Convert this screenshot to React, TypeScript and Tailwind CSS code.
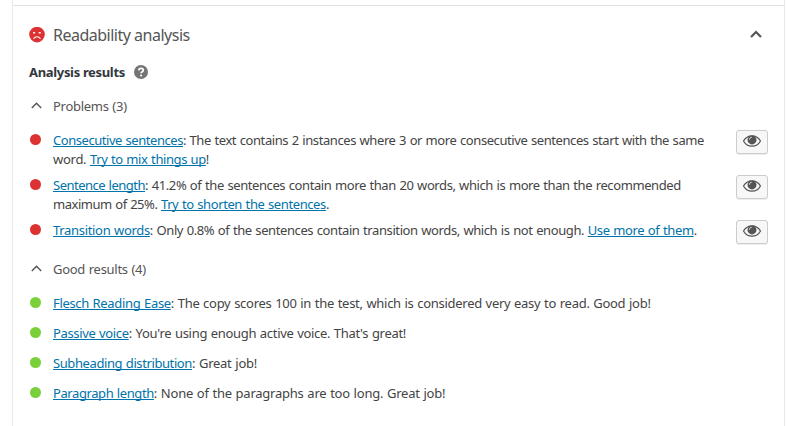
import type { ReactNode } from "react";

type Part = { text: string; link?: boolean; spacing: string };
type Line = Part[];

const problems: Line[][] = [
  [
    [
      { text: "Consecutive sentences", link: true, spacing: "tracking-[-0.45px]" },
      { text: ": The text contains 2 instances where 3 or more consecutive sentences start with the same", spacing: "tracking-[-0.415px]" },
    ],
    [
      { text: "word. ", spacing: "tracking-[-0.27px]" },
      { text: "Try to mix things up", link: true, spacing: "tracking-[-0.4px]" },
      { text: "!", spacing: "tracking-normal" },
    ],
  ],
  [
    [
      { text: "Sentence length", link: true, spacing: "tracking-[-0.5px]" },
      { text: ": 41.2% of the sentences contain more than 20 words, which is more than the recommended", spacing: "tracking-[-0.405px]" },
    ],
    [
      { text: "maximum of 25%. ", spacing: "tracking-[-0.47px]" },
      { text: "Try to shorten the sentences", link: true, spacing: "tracking-[-0.4px]" },
      { text: ".", spacing: "tracking-normal" },
    ],
  ],
  [
    [
      { text: "Transition words", link: true, spacing: "tracking-[-0.32px]" },
      { text: ": Only 0.8% of the sentences contain transition words, which is not enough. ", spacing: "tracking-[-0.4px]" },
      { text: "Use more of them", link: true, spacing: "tracking-[-0.38px]" },
      { text: ".", spacing: "tracking-normal" },
    ],
  ],
];

const goodResults: Line[][] = [
  [[
    { text: "Flesch Reading Ease", link: true, spacing: "tracking-[-0.33px]" },
    { text: ": The copy scores 100 in the test, which is considered very easy to read. Good job!", spacing: "tracking-[-0.285px]" },
  ]],
  [[
    { text: "Passive voice", link: true, spacing: "tracking-[-0.35px]" },
    { text: ": You're using enough active voice. That's great!", spacing: "tracking-[-0.31px]" },
  ]],
  [[
    { text: "Subheading distribution", link: true, spacing: "tracking-[-0.4px]" },
    { text: ": Great job!", spacing: "tracking-[-0.25px]" },
  ]],
  [[
    { text: "Paragraph length", link: true, spacing: "tracking-[-0.41px]" },
    { text: ": None of the paragraphs are too long. Great job!", spacing: "tracking-[-0.23px]" },
  ]],
];

function SadFace() {
  return (
    <svg className="h-4 w-4" viewBox="0 0 16 16">
      <circle cx="8" cy="7.6" r="7.8" fill="#dc3232" />
      <rect x="4" y="5" width="2.2" height="1.600" rx=".5" fill="#fff" />
      <rect x="9.6" y="5" width="2.2" height="1.600" rx=".5" fill="#fff" />
      <path d="M4.500 11.700C5.400 10.300 6.600 9.800 8 9.800s2.600.5 3.500 1.900" fill="none" stroke="#fff" strokeWidth="1.100" />
    </svg>
  );
}

function Eye() {
  return (
    <svg className="h-[14px] w-[20px]" viewBox="0 0 20 14">
      <path d="M1.500 7C3.500 3.500 6.400 1.800 10 1.800S16.500 3.500 18.500 7C16.500 10.500 13.600 12.200 10 12.200S3.500 10.500 1.500 7z" fill="none" stroke="#555" strokeWidth="1.200" />
      <circle cx="10" cy="5.900" r="4.500" fill="#555" />
      <path d="M7.500 5.600c0-1.400.9-2.300 2.200-2.300" fill="none" stroke="#f7f7f7" strokeWidth=".9" />
    </svg>
  );
}

function Result({ lines, color, button }: { lines: Line[]; color: string; button?: boolean }) {
  return (
    <li className="flex min-h-[24px] items-start">
      <span className={`mt-[4px] ml-[17px] h-[11px] w-[11px] shrink-0 rounded-full ${color}`} />
      <p className="ml-[12px] min-w-0 flex-1 pt-px leading-[19px] [word-spacing:0.6px]">
        {lines.map((line, i) => (
          <span key={i} className="block whitespace-pre">
            {line.map((part) =>
              part.link ? (
                <a key={part.text} href="#" className={`text-[#0073aa] underline decoration-1 underline-offset-1 [text-decoration-skip-ink:none] ${part.spacing}`}>{part.text}</a>
              ) : (
                <span key={part.text} className={part.spacing}>{part.text}</span>
              )
            )}
          </span>
        ))}
      </p>
      {button && (
        <button className="mr-4 flex h-6 w-8 shrink-0 justify-center rounded-[3px] border border-[#ccc] bg-[#f7f7f7] pt-[3px] shadow-[0_1px_0_#eee]">
          <Eye />
        </button>
      )}
    </li>
  );
}

function GroupTitle({ children }: { children: ReactNode }) {
  return (
    <h3 className="flex h-5 items-center text-[#555]">
      <svg className="mb-[2px] ml-[18px] h-[7px] w-[11px]" viewBox="0 0 11 7">
        <path d="M.8 6L5.500 1.200 10.200 6" fill="none" stroke="#555" strokeWidth="1.400" />
      </svg>
      <span className="ml-[11px] pt-[2px] tracking-[-0.28px] [word-spacing:0.6px]">{children}</span>
    </h3>
  );
}

export default function App() {
  return (
    <div className="h-[426px] w-[786px] overflow-hidden bg-white pl-[12px] font-['Noto_Sans',sans-serif] text-[13px] leading-[19.5px] text-[#444]">
      <div className="h-full w-[773px] border-x border-[#e8e8e8]">
        <div className="h-[6px] border-b border-[#e2e2e2]" />
        <div className="flex h-[58px] items-center">
          <span className="ml-4"><SadFace /></span>
          <h1 className="ml-2 text-base tracking-[-0.5px] text-[#555]">Readability analysis</h1>
          <svg className="mr-[22px] mb-[2px] ml-auto h-[8px] w-[12px]" viewBox="0 0 12 8">
            <path d="M1 7L6 2l5 5" fill="none" stroke="#555" strokeWidth="2.200" />
          </svg>
        </div>
        <div className="flex h-4 items-center">
          <h2 className="ml-4 pt-[2px] font-bold tracking-[-0.33px] text-[#32373c]">Analysis results</h2>
          <svg className="ml-[9px] h-[14px] w-[14px]" viewBox="0 0 14 14">
            <circle cx="7" cy="7" r="7" fill="#757575" />
            <path d="M4.800 5.400C4.900 4 5.800 3.400 7.100 3.400c1.300 0 2.200.7 2.200 1.800 0 1.600-2.100 1.500-2.200 3.100" fill="none" stroke="#fff" strokeWidth="1.700" />
            <circle cx="7.100" cy="10.500" r="1.050" fill="#fff" />
          </svg>
        </div>
        <div className="mt-4">
          <GroupTitle>Problems (3)</GroupTitle>
        </div>
        <ul className="mt-[14px] flex flex-col gap-[6px]">
          {problems.map((lines, i) => <Result key={i} lines={lines} color="bg-[#dc3232]" button />)}
        </ul>
        <div className="mt-[15px]">
          <GroupTitle>Good results (4)</GroupTitle>
        </div>
        <ul className="mt-[14px] flex flex-col gap-[6px]">
          {goodResults.map((lines, i) => <Result key={i} lines={lines} color="bg-[#7ad03a]" />)}
        </ul>
      </div>
    </div>
  );
}
